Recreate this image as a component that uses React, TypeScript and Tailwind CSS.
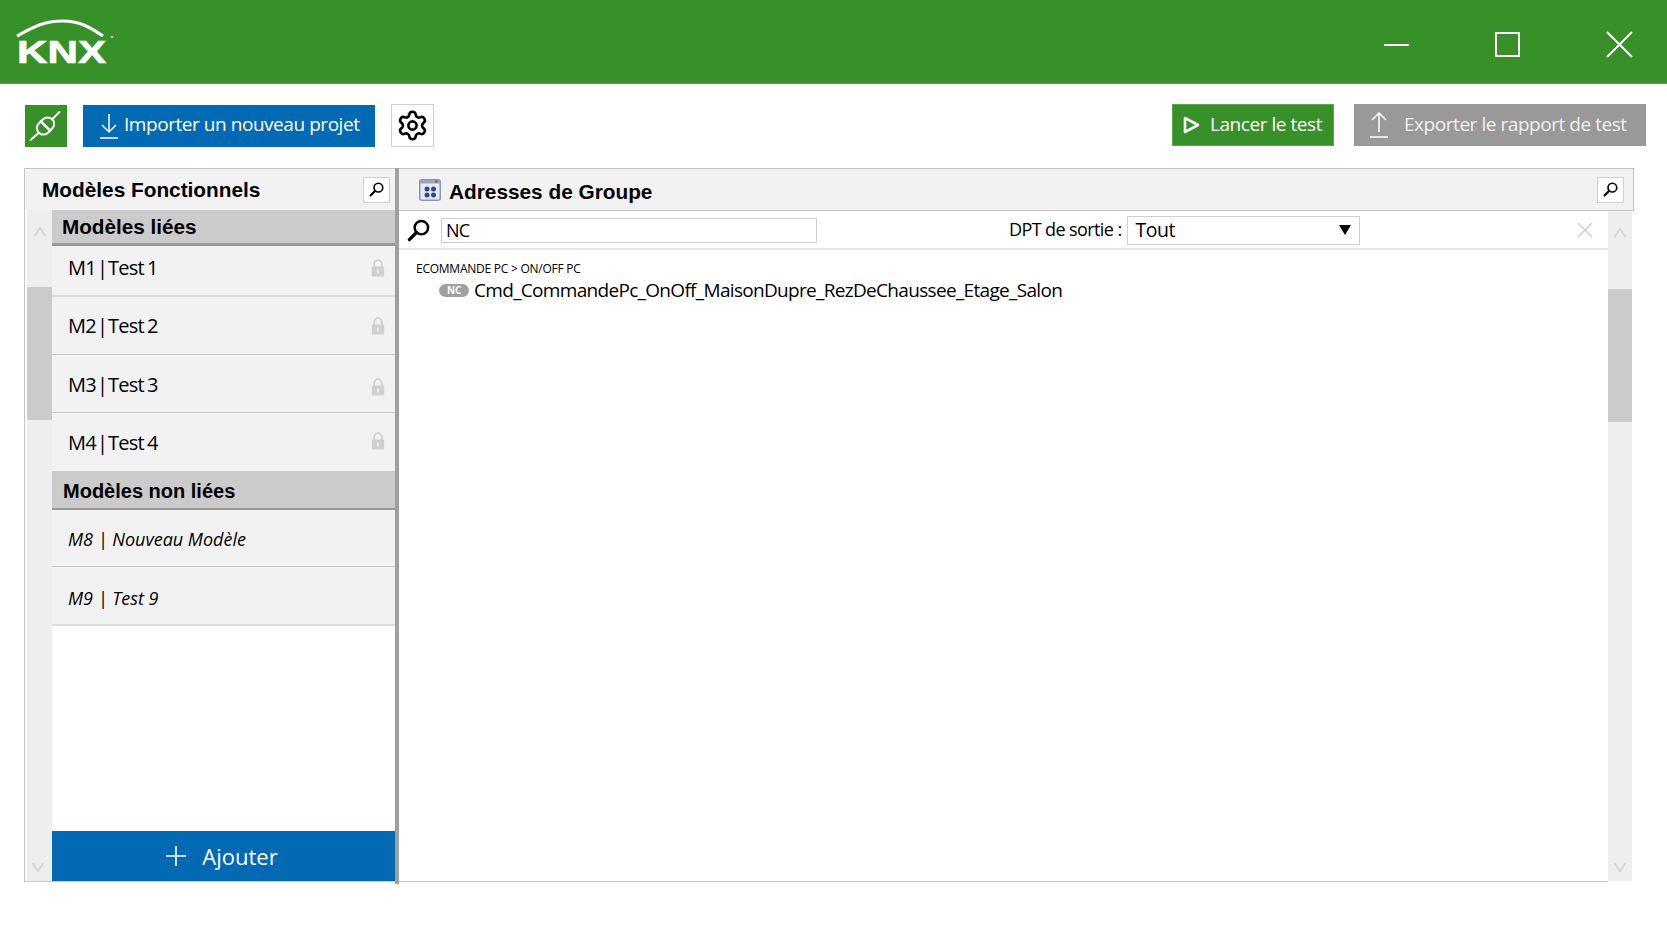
import React from "react";
import { Settings } from "lucide-react";

const seg = "font-['Open_Sans','Noto_Sans',sans-serif]";
const ari = "font-['Liberation_Sans',Arial,sans-serif]";

function Mag({ size = 16, sw = 2.6 }: { size?: number; sw?: number }) {
  return (
    <svg width={size} height={size} viewBox="0 0 24 24" fill="none" stroke="#000" strokeLinecap="round">
      <circle cx="15" cy="9" r="7" strokeWidth={sw} />
      <path d="M10 14 L2.5 21.5" strokeWidth={sw * 1.35} />
    </svg>
  );
}

function Lock({ className = "" }: { className?: string }) {
  return (
    <svg width="14" height="18" viewBox="0 0 14 18" className={className}>
      <path d="M3.2 8V5a3.8 3.8 0 0 1 7.6 0v3" fill="none" stroke="#d0d0d0" strokeWidth="1.8" />
      <rect x="0.8" y="7.5" width="12.4" height="10" rx="1" fill="#d0d0d0" />
      <rect x="6.2" y="10.5" width="1.6" height="4" fill="#f2f2f2" />
    </svg>
  );
}

function Chevron({ up }: { up?: boolean }) {
  return (
    <svg width="14" height="14" viewBox="0 0 14 14" fill="none" stroke="#d6d6d6" strokeWidth="2">
      <path d={up ? "M1.5 11 L7 3 L12.5 11" : "M1.5 3 L7 11 L12.5 3"} />
    </svg>
  );
}

function Row({ code, name, box, textCls, lockCls }: { code: string; name: string; box: string; textCls: string; lockCls: string }) {
  return (
    <div className={`flex items-center justify-between bg-[#f2f2f2] pl-[16px] pr-[10px] ${box}`}>
      <span className={`whitespace-pre text-[20px] tracking-[-0.75px] text-black ${textCls}`}>
        <span className="[word-spacing:-3.5px]">{code} | </span>
        <span className="[word-spacing:-1.5px]">{name}</span>
      </span>
      <Lock className={lockCls} />
    </div>
  );
}

function ItalicRow({ text, box, textCls }: { text: string; box: string; textCls: string }) {
  return (
    <div className={`flex items-center bg-[#f2f2f2] pl-[16px] ${box}`}>
      <span className={`whitespace-pre text-[18px] italic tracking-[0px] text-black ${textCls}`}>{text}</span>
    </div>
  );
}

function Section({ text, box }: { text: string; box: string }) {
  return <div className={`flex items-center bg-[#cbcbcb] ${ari} font-bold text-black ${box}`}>{text}</div>;
}

function MiniSearch() {
  return (
    <div className="flex h-[26px] w-[27px] items-center justify-center border border-[#d0d0d0] bg-white">
      <Mag size={15} />
    </div>
  );
}

export default function App() {
  return (
    <div className={`h-[938px] w-[1667px] overflow-hidden bg-white ${seg}`}>
      {/* Title bar */}
      <header className="flex h-[84px] items-center justify-between border-b border-[#5aa64c] bg-[#389028] pl-[16px] pr-[34px]">
        <svg width="104" height="58" viewBox="0 0 104 58" className="mt-[5px]">
          <path d="M1 21 C 14 14, 26 6, 46 6 C 66 6, 76 14, 87 21" fill="none" stroke="#fff" strokeWidth="3.2" />
          <rect x="95" y="21" width="2" height="2" fill="#fff" />
          <text x="1" y="48" textLength="89" lengthAdjust="spacingAndGlyphs" fill="#fff" stroke="#fff" strokeWidth="0.7" className={ari} fontSize="32" fontWeight="700">KNX</text>
        </svg>
        <div className="mt-[6px] flex items-center gap-[86px]">
          <div className="h-[2px] w-[25px] bg-white" />
          <div className="h-[25px] w-[25px] border-2 border-[#fff]" />
          <svg width="27" height="27" viewBox="0 0 27 27" stroke="#fff" strokeWidth="2">
            <path d="M1 1 L26 26 M26 1 L1 26" />
          </svg>
        </div>
      </header>

      {/* Toolbar */}
      <div className="flex h-[84px] items-start justify-between pl-[25px] pr-[21px] pt-[20px]">
        <div className="flex items-center gap-[16px]">
          <div className="flex h-[42px] w-[42px] items-center justify-center bg-[#389028]">
            <svg width="42" height="42" viewBox="0 0 42 42" fill="none" stroke="#fff" strokeWidth="2" strokeLinecap="round">
              <path d="M5.5 35 L13 28.5 M27.5 14 L34.5 7" />
              <g transform="rotate(-45 20.5 21)">
                <rect x="11" y="14.5" width="19" height="13" rx="6.5" />
                <path d="M20.5 14.5 V27.5" strokeWidth="2.6" />
              </g>
            </svg>
          </div>
          <div className="flex h-[42px] w-[292px] items-center bg-[#026ab4] pl-[16px] text-[19px] tracking-[-0.45px] text-white">
            <svg width="20" height="26" viewBox="0 0 20 26" fill="none" stroke="#fff" strokeWidth="1.5" className="mr-[5px] shrink-0">
              <path d="M10 1 V19 M3 12 L10 19 L17 12 M1 25 H19" />
            </svg>
            <span className="mt-[-2px]">Importer un nouveau projet</span>
          </div>
          <div className="flex h-[43px] w-[43px] items-center justify-center border border-[#cfcfcf] bg-white">
            <Settings size={33} strokeWidth={1.9} color="#000" />
          </div>
        </div>
        <div className="flex items-center gap-[20px]">
          <div className="flex h-[42px] w-[162px] items-center border border-[#5aa64c] bg-[#389028] pl-[10px] text-[19px] tracking-[-0.45px] text-white">
            <svg width="17" height="18" viewBox="0 0 17 18" fill="none" stroke="#fff" strokeWidth="2.6" className="mr-[10px]" strokeLinejoin="round">
              <path d="M2 2 L15 9 L2 16 Z" />
            </svg>
            <span className="mt-[-2px]">Lancer le test</span>
          </div>
          <div className="flex h-[42px] w-[292px] items-center bg-[#999999] pl-[15px] text-[19px] tracking-[-0.45px] text-[#f0f0f0]">
            <svg width="20" height="26" viewBox="0 0 20 26" fill="none" stroke="#fff" strokeWidth="1.5" className="mr-[15px] shrink-0">
              <path d="M10 20 V1 M3 8 L10 1 L17 8 M1 25 H19" />
            </svg>
            <span className="mt-[-2px]">Exporter le rapport de test</span>
          </div>
        </div>
      </div>

      {/* Panels */}
      <div className="ml-[24px] flex h-[714px] w-[1611px]">
        {/* Left panel */}
        <div className="flex w-[371px] flex-col border-y border-l border-[#c4c4c4] border-b-[#c8c8c8]">
          <div className="flex h-[41px] shrink-0 items-center justify-between bg-[#f2f2f2] pl-[17px] pr-[5px]">
            <span className={`${ari} text-[20.8px] font-bold text-black`}>Modèles Fonctionnels</span>
            <MiniSearch />
          </div>
          <div className="flex min-h-0 flex-1 pl-[2px]">
            <div className="flex w-[25px] shrink-0 flex-col bg-[#eeeeee]">
              <div className="flex h-[77px] shrink-0 justify-center pt-[15px]"><Chevron up /></div>
              <div className="h-[133px] shrink-0 bg-[#cbcbcb]" />
              <div className="flex flex-1 items-end justify-center pb-[7px] pr-[3px]"><Chevron /></div>
            </div>
            <div className="flex min-w-0 flex-1 flex-col">
              <Section text="Modèles liées" box="h-[36px] border-b-[3px] border-[#999999] pl-[10px] text-[20.7px]" />
              <Row code="M1" name="Test 1" box="h-[51px] border-b-2 border-[#dddddd]" textCls="mt-[-5px]" lockCls="mt-[-5px]" />
              <Row code="M2" name="Test 2" box="h-[58px] border-b border-[#c8c8c8]" textCls="" lockCls="" />
              <Row code="M3" name="Test 3" box="h-[58px] border-b border-[#c8c8c8]" textCls="mt-[2px]" lockCls="mt-[6px]" />
              <Row code="M4" name="Test 4" box="h-[58px]" textCls="mt-[2px]" lockCls="mt-[-2px]" />
              <Section text="Modèles non liées" box="h-[39px] border-b-2 border-[#999999] pl-[11px] pt-[2px] text-[20px]" />
              <ItalicRow text="M8 | Nouveau Modèle" box="h-[57px] border-b border-[#c8c8c8]" textCls="mt-[3px]" />
              <ItalicRow text="M9 | Test 9" box="h-[59px] border-b-2 border-[#dddddd]" textCls="mt-[5px]" />
              <div className="flex-1 bg-white" />
              <div className="flex h-[50px] shrink-0 items-center justify-center gap-[16px] bg-[#026ab4] pr-[3px] text-[22px] text-white">
                <svg width="20" height="20" viewBox="0 0 20 20" stroke="#fff" strokeWidth="1.6">
                  <path d="M10 0 V20 M0 10 H20" />
                </svg>
                <span>Ajouter</span>
              </div>
            </div>
          </div>
        </div>

        {/* Splitter */}
        <div className="h-[716px] w-[4px] shrink-0 bg-[#a0a0a0]" />

        {/* Right panel */}
        <div className="flex w-[1235px] shrink-0 flex-col">
          <div className="flex h-[43px] shrink-0 items-center justify-between border border-l-0 border-[#c4c4c4] bg-[#f2f2f2] pl-[20px] pr-[9px]">
            <div className="flex items-center gap-[8px]">
              <svg width="22" height="22" viewBox="0 0 22 22">
                <rect x="0.75" y="0.75" width="20.5" height="20.5" rx="2" fill="#e6eaf3" stroke="#8c97ad" strokeWidth="1.5" />
                <rect x="1" y="1" width="20" height="3.5" fill="#9aa5bb" />
                <rect x="16" y="1.5" width="2.5" height="2" fill="#b0404a" />
                <circle cx="8" cy="10" r="2.5" fill="#31459a" />
                <circle cx="14.5" cy="10" r="2.5" fill="#31459a" />
                <circle cx="8" cy="16" r="2.5" fill="#31459a" />
                <circle cx="14.5" cy="16" r="2.5" fill="#31459a" />
              </svg>
              <span className={`${ari} mt-[5px] text-[20.8px] font-bold text-black`}>Adresses de Groupe</span>
            </div>
            <MiniSearch />
          </div>
          <div className="flex min-h-0 flex-1">
            <div className="flex min-w-0 flex-1 flex-col border-b border-[#c8c8c8]">
              <div className="flex h-[39px] shrink-0 items-center border-b-2 border-[#e4e4e4] pl-[8px] pr-[15px] pt-[1px]">
                <Mag size={23} sw={2.6} />
                <div className="ml-[11px] flex h-[25px] w-[376px] items-center border border-[#cfcfcf] pl-[4px] text-[18px] tracking-[-0.8px] text-black">NC</div>
                <div className="ml-[192px] mt-[-2px] whitespace-pre text-[18px] tracking-[-0.6px] text-black">DPT de sortie : </div>
                <div className="ml-[1px] flex h-[29px] w-[233px] items-center justify-between border border-[#cfcfcf] pl-[8px] pr-[8px] text-[19.5px] tracking-[-0.5px] text-black">
                  Tout
                  <span className="h-0 w-0 border-x-[6px] border-t-[10px] border-x-transparent border-t-black" />
                </div>
                <svg width="16" height="16" viewBox="0 0 16 16" stroke="#d0d0d0" strokeWidth="1.6" className="ml-auto">
                  <path d="M1 1 L15 15 M15 1 L1 15" />
                </svg>
              </div>
              <div className="pl-[17px] pt-[10px]">
                <div className="whitespace-pre text-[12px] leading-[18px] tracking-[-0.25px] text-black">ECOMMANDE PC &gt; ON/OFF PC</div>
                <div className="ml-[23px] mt-[1px] flex h-[22px] items-center">
                  <span className="flex h-[13px] w-[30px] items-center justify-center rounded-full bg-[#a0a0a0] text-[10px] font-bold tracking-[-0.3px] text-white">NC</span>
                  <span className="ml-[5px] whitespace-pre text-[19px] tracking-[-0.68px] text-black">Cmd_CommandePc_OnOff_MaisonDupre_RezDeChaussee_Etage_Salon</span>
                </div>
              </div>
            </div>
            <div className="mr-[2px] flex h-[670px] w-[24px] shrink-0 flex-col bg-[#eeeeee]">
              <div className="flex h-[78px] shrink-0 justify-center pt-[15px]"><Chevron up /></div>
              <div className="h-[133px] shrink-0 bg-[#cbcbcb]" />
              <div className="flex flex-1 items-end justify-center pb-[7px]"><Chevron /></div>
            </div>
          </div>
        </div>
      </div>
    </div>
  );
}
